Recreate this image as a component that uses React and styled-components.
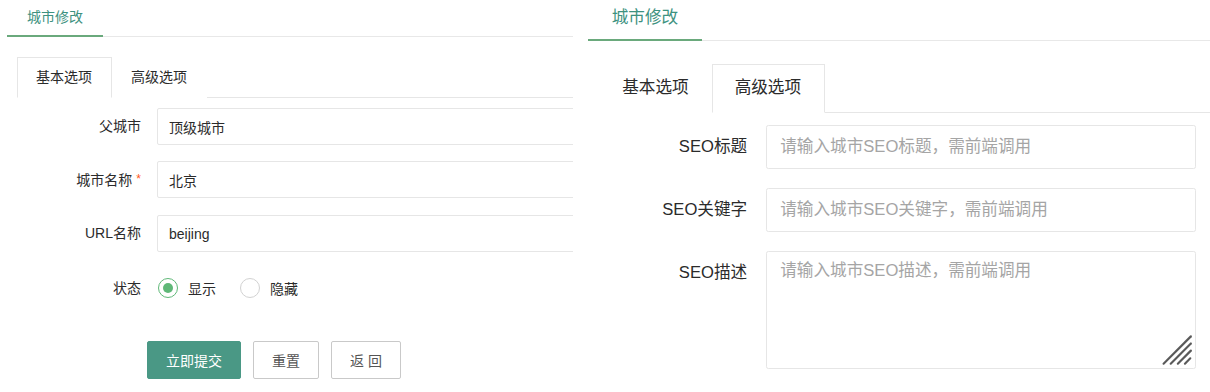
import React from "react";
import styled, { createGlobalStyle } from "styled-components";

const GlobalStyle = createGlobalStyle`
  html, body {
    margin: 0;
    padding: 0;
    background: #fff;
  }
  body {
    font-family: "Liberation Sans", "Noto Sans CJK SC", sans-serif;
    font-size: 14px;
    color: #333;
  }
  * {
    box-sizing: border-box;
  }
`;

const Page = styled.div`
  display: flex;
  align-items: flex-start;
  gap: 15px;
  padding-left: 7px;
  width: 1210px;
  height: 392px;
  overflow: hidden;
`;

const Panel = styled.section`
  flex: none;
  width: ${(p) => p.$width}px;
  zoom: ${(p) => p.$zoom || 1};
  margin-top: ${(p) => p.$shift || 0}px;
  overflow: hidden;
`;

const Inner = styled.div`
  width: ${(p) => p.$width}px;
`;

const HeaderBar = styled.div`
  display: flex;
  border-bottom: 1px solid #e8e8e8;
`;

const HeaderTab = styled.div`
  padding: 0 20px;
  height: 37px;
  line-height: 35px;
  margin-bottom: -1px;
  color: #3d9280;
  border-bottom: 2px solid #6aa97c;
`;

const TabBar = styled.div`
  display: flex;
  margin: 20px 0 0 10px;
  height: 41px;
  border-bottom: 1px solid #e6e6e6;
`;

const Tab = styled.div`
  height: 41px;
  line-height: 39px;
  padding: 0 19px 0 18px;
  background: #fff;
  color: #2b2b2b;
  border: 1px solid ${(p) => (p.$active ? "#e6e6e6" : "transparent")};
  border-bottom-color: ${(p) => (p.$active ? "#fff" : "transparent")};
`;

const Content = styled.div`
  padding: 10px 0 0 10px;
`;

const Row = styled.div`
  display: flex;
  align-items: flex-start;
  margin-bottom: ${(p) => (p.$gap != null ? p.$gap : 16)}px;
`;

const Label = styled.label`
  flex: none;
  width: 124px;
  margin-right: 16px;
  text-align: right;
  line-height: ${(p) => p.$h || 37}px;
  color: #2b2b2b;
  white-space: nowrap;
`;

const Req = styled.span`
  color: #ff5722;
  font-size: 12px;
  margin-left: 4px;
  vertical-align: 2px;
`;

const Field = styled.div`
  flex: 1;
  min-width: 0;
  margin-right: 12px;
  position: relative;
`;

const Input = styled.input`
  display: block;
  width: 100%;
  height: 37px;
  padding: 0 11px;
  border: 1px solid #e6e6e6;
  border-radius: 2px;
  font: inherit;
  color: #2b2b2b;
  outline: none;
  &::placeholder {
    color: #a5a5a5;
  }
`;

const TextArea = styled.textarea`
  display: block;
  width: 100%;
  height: 100px;
  padding: 6px 11px;
  border: 1px solid #e6e6e6;
  border-radius: 2px;
  font: inherit;
  line-height: 20px;
  color: #333;
  resize: none;
  outline: none;
  &::placeholder {
    color: #a5a5a5;
  }
`;

const Grip = styled.svg`
  position: absolute;
  right: 2px;
  bottom: 2px;
  width: 28px;
  height: 28px;
  pointer-events: none;
`;

const RadioGroup = styled.div`
  display: flex;
  align-items: center;
  height: 40px;
  padding-left: 1px;
`;

const RadioItem = styled.div`
  display: flex;
  align-items: center;
  margin-right: 24px;
  color: #2b2b2b;
`;

const Circle = styled.span`
  display: grid;
  place-items: center;
  width: 20px;
  height: 20px;
  margin-right: 10px;
  border-radius: 50%;
  border: 1px solid ${(p) => (p.$on ? "#5fb878" : "#d2d2d2")};
  &::after {
    content: "";
    width: 10px;
    height: 10px;
    border-radius: 50%;
    background: ${(p) => (p.$on ? "#5fb878" : "transparent")};
  }
`;

const ButtonRow = styled.div`
  display: flex;
  gap: 12px;
  margin-left: 130px;
`;

const Button = styled.button`
  height: 38px;
  padding: 0 18px;
  border-radius: 2px;
  font: inherit;
  font-size: 14px;
  cursor: pointer;
  color: ${(p) => (p.$primary ? "#fff" : "#555")};
  background: ${(p) => (p.$primary ? "#4a9885" : "#fff")};
  border: 1px solid ${(p) => (p.$primary ? "#4a9885" : "#c9c9c9")};
`;

function Radio({ on, children }) {
  return (
    <RadioItem>
      <Circle $on={on} />
      {children}
    </RadioItem>
  );
}

function FormPanel({ active, width, innerWidth, zoom, shift, children }) {
  return (
    <Panel $width={width} $zoom={zoom} $shift={shift}>
      <Inner $width={innerWidth}>
        <HeaderBar>
          <HeaderTab>城市修改</HeaderTab>
        </HeaderBar>
        <TabBar>
          <Tab $active={active === 0}>基本选项</Tab>
          <Tab $active={active === 1}>高级选项</Tab>
        </TabBar>
        <Content>{children}</Content>
      </Inner>
    </Panel>
  );
}

export default function App() {
  return (
    <>
      <GlobalStyle />
      <Page>
        <FormPanel active={0} width={566} innerWidth={580}>
          <Row>
            <Label>父城市</Label>
            <Field>
              <Input defaultValue="顶级城市" />
            </Field>
          </Row>
          <Row>
            <Label>
              城市名称<Req>*</Req>
            </Label>
            <Field>
              <Input defaultValue="北京" />
            </Field>
          </Row>
          <Row>
            <Label>URL名称</Label>
            <Field>
              <Input defaultValue="beijing" />
            </Field>
          </Row>
          <Row $gap={33}>
            <Label $h={40}>状态</Label>
            <RadioGroup>
              <Radio on>显示</Radio>
              <Radio>隐藏</Radio>
            </RadioGroup>
          </Row>
          <ButtonRow>
            <Button $primary>立即提交</Button>
            <Button>重置</Button>
            <Button>返 回</Button>
          </ButtonRow>
        </FormPanel>

        <FormPanel active={1} width={524} innerWidth={524} zoom={1.1875} shift={-2.7}>
          <Row>
            <Label>SEO标题</Label>
            <Field>
              <Input placeholder="请输入城市SEO标题，需前端调用" />
            </Field>
          </Row>
          <Row>
            <Label>SEO关键字</Label>
            <Field>
              <Input placeholder="请输入城市SEO关键字，需前端调用" />
            </Field>
          </Row>
          <Row>
            <Label>SEO描述</Label>
            <Field>
              <TextArea placeholder="请输入城市SEO描述，需前端调用" />
              <Grip viewBox="0 0 28 28">
                <g stroke="#5a5a5a" strokeWidth="1.8" strokeLinecap="round">
                  <line x1="3" y1="25" x2="26" y2="2" />
                  <line x1="9" y1="25" x2="26" y2="8" />
                  <line x1="15" y1="25" x2="26" y2="14" />
                  <line x1="21" y1="25" x2="25.5" y2="20.5" />
                </g>
              </Grip>
            </Field>
          </Row>
        </FormPanel>
      </Page>
    </>
  );
}
